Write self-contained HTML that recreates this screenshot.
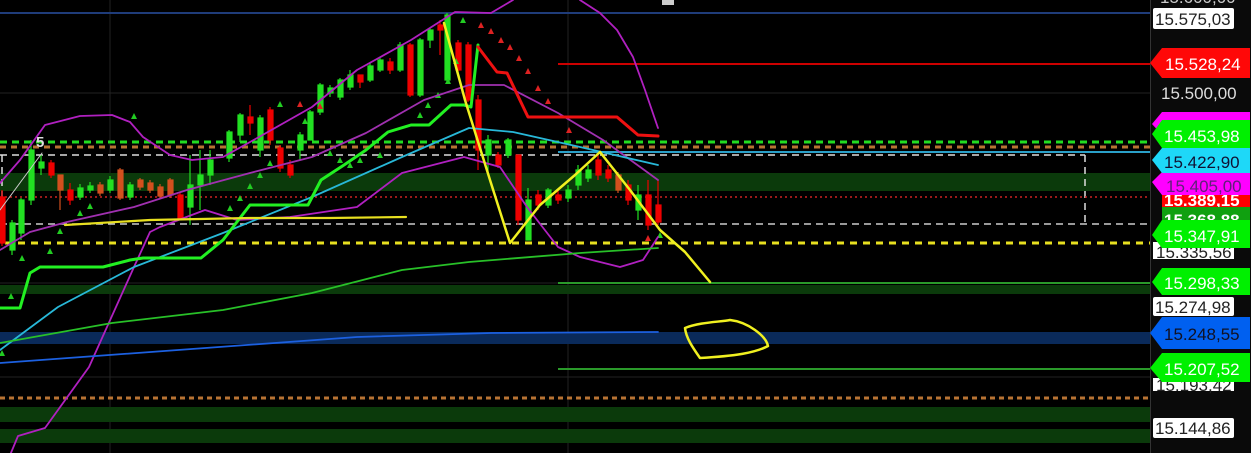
<!DOCTYPE html>
<html><head><meta charset="utf-8"><style>
html,body{margin:0;padding:0;background:#000;width:1251px;height:453px;overflow:hidden}
svg{display:block}
text{font-family:"Liberation Sans",sans-serif}
</style></head><body>
<svg width="1251" height="453" viewBox="0 0 1251 453" xmlns="http://www.w3.org/2000/svg">
<rect width="1251" height="453" fill="#000"/>
<g stroke="#222" stroke-width="1">
<line x1="0" y1="93" x2="1150" y2="93"/><line x1="0" y1="283" x2="1150" y2="283"/><line x1="0" y1="377" x2="1150" y2="377"/>
<line x1="110" y1="0" x2="110" y2="453"/><line x1="568" y1="0" x2="568" y2="453"/>
</g>
<rect x="0" y="173" width="1150" height="18" fill="#0b3a0b"/>
<rect x="0" y="285" width="1150" height="9" fill="#0b3a0b"/>
<rect x="0" y="332" width="1150" height="12" fill="#0a2a5a"/>
<rect x="0" y="407" width="1150" height="15" fill="#0b3a0b"/>
<rect x="0" y="429" width="1150" height="14" fill="#0b3a0b"/>
<line x1="0" y1="13" x2="1150" y2="13" stroke="#1f3c7a" stroke-width="2"/>
<line x1="558" y1="64" x2="1150" y2="64" stroke="#c00" stroke-width="2"/>
<line x1="558" y1="283" x2="1150" y2="283" stroke="#2a9a2a" stroke-width="2"/>
<line x1="558" y1="369" x2="1150" y2="369" stroke="#2a9a2a" stroke-width="2"/>
<line x1="558" y1="152" x2="1150" y2="152" stroke="#2aa0c8" stroke-width="2"/>
<line x1="0" y1="142" x2="1150" y2="142" stroke="#22dd22" stroke-width="3" stroke-dasharray="7,5"/>
<line x1="0" y1="147" x2="1150" y2="147" stroke="#b87333" stroke-width="3" stroke-dasharray="6,5"/>
<line x1="0" y1="155" x2="1085" y2="155" stroke="#ddd" stroke-width="1.5" stroke-dasharray="7,5"/>
<line x1="0" y1="224" x2="1150" y2="224" stroke="#ccc" stroke-width="1.5" stroke-dasharray="7,5"/>
<line x1="1085" y1="155" x2="1085" y2="224" stroke="#ddd" stroke-width="1.5" stroke-dasharray="7,5"/>
<line x1="2" y1="155" x2="2" y2="224" stroke="#ddd" stroke-width="1.5" stroke-dasharray="7,5"/>
<line x1="0" y1="197" x2="1150" y2="197" stroke="#c22" stroke-width="1.5" stroke-dasharray="2,3"/>
<line x1="5" y1="243" x2="1150" y2="243" stroke="#e8e020" stroke-width="3" stroke-dasharray="7,6"/>
<line x1="0" y1="398" x2="1150" y2="398" stroke="#b87333" stroke-width="3" stroke-dasharray="5,4"/>
<g stroke-width="1.2">
<g fill="#e00" stroke="#e00">
<line x1="2" y1="190" x2="2" y2="246"/><rect x="0" y="197" width="5" height="46"/>
<line x1="51" y1="160" x2="51" y2="178"/><rect x="49" y="163" width="5" height="12"/>
<line x1="70" y1="183" x2="70" y2="205"/><rect x="68" y="190" width="5" height="10"/>
<line x1="180" y1="193" x2="180" y2="220"/><rect x="178" y="195" width="5" height="23"/>
<line x1="250" y1="105" x2="250" y2="135"/><rect x="248" y="117" width="5" height="6"/>
<line x1="270" y1="107" x2="270" y2="145"/><rect x="268" y="110" width="5" height="30"/>
<line x1="280" y1="145" x2="280" y2="172"/><rect x="278" y="148" width="5" height="20"/>
<line x1="290" y1="160" x2="290" y2="178"/><rect x="288" y="165" width="5" height="10"/>
<line x1="360" y1="75" x2="360" y2="88"/><rect x="358" y="75" width="5" height="7"/>
<line x1="390" y1="58" x2="390" y2="74"/><rect x="388" y="62" width="5" height="8"/>
<line x1="410" y1="43" x2="410" y2="97"/><rect x="408" y="45" width="5" height="50"/>
<line x1="440" y1="20" x2="440" y2="55"/><rect x="438" y="25" width="5" height="5"/>
<line x1="458" y1="40" x2="458" y2="75"/><rect x="456" y="43" width="5" height="27"/>
<line x1="468" y1="42" x2="468" y2="102"/><rect x="466" y="45" width="5" height="55"/>
<line x1="478" y1="95" x2="478" y2="170"/><rect x="476" y="100" width="5" height="50"/>
<line x1="498" y1="152" x2="498" y2="168"/><rect x="496" y="155" width="5" height="10"/>
<line x1="518" y1="155" x2="518" y2="225"/><rect x="516" y="155" width="5" height="65"/>
<line x1="538" y1="190" x2="538" y2="210"/><rect x="536" y="195" width="5" height="10"/>
<line x1="558" y1="190" x2="558" y2="204"/><rect x="556" y="195" width="5" height="5"/>
<line x1="598" y1="155" x2="598" y2="180"/><rect x="596" y="160" width="5" height="15"/>
<line x1="608" y1="165" x2="608" y2="182"/><rect x="606" y="170" width="5" height="8"/>
<line x1="628" y1="180" x2="628" y2="205"/><rect x="626" y="185" width="5" height="15"/>
<line x1="648" y1="180" x2="648" y2="230"/><rect x="646" y="195" width="5" height="30"/>
<line x1="658" y1="180" x2="658" y2="225"/><rect x="656" y="205" width="5" height="17"/>
</g>
<g fill="#d2501e" stroke="#d2501e">
<line x1="60" y1="175" x2="60" y2="210"/><rect x="58" y="175" width="5" height="15"/>
<line x1="100" y1="182" x2="100" y2="196"/><rect x="98" y="185" width="5" height="8"/>
<line x1="120" y1="168" x2="120" y2="200"/><rect x="118" y="170" width="5" height="28"/>
<line x1="140" y1="178" x2="140" y2="190"/><rect x="138" y="180" width="5" height="7"/>
<line x1="150" y1="180" x2="150" y2="193"/><rect x="148" y="183" width="5" height="7"/>
<line x1="160" y1="184" x2="160" y2="199"/><rect x="158" y="187" width="5" height="9"/>
<line x1="170" y1="178" x2="170" y2="198"/><rect x="168" y="180" width="5" height="15"/>
<line x1="618" y1="172" x2="618" y2="193"/><rect x="616" y="175" width="5" height="15"/>
</g>
<g fill="#22e022" stroke="#22e022">
<line x1="12" y1="220" x2="12" y2="255"/><rect x="10" y="223" width="5" height="27"/>
<line x1="21" y1="198" x2="21" y2="240"/><rect x="19" y="200" width="5" height="33"/>
<line x1="31" y1="140" x2="31" y2="205"/><rect x="29" y="150" width="5" height="50"/>
<line x1="41" y1="155" x2="41" y2="175"/><rect x="39" y="162" width="5" height="6"/>
<line x1="80" y1="184" x2="80" y2="200"/><rect x="78" y="188" width="5" height="9"/>
<line x1="90" y1="182" x2="90" y2="193"/><rect x="88" y="186" width="5" height="4"/>
<line x1="110" y1="176" x2="110" y2="193"/><rect x="108" y="180" width="5" height="10"/>
<line x1="130" y1="182" x2="130" y2="200"/><rect x="128" y="185" width="5" height="12"/>
<line x1="190" y1="155" x2="190" y2="225"/><rect x="188" y="185" width="5" height="22"/>
<line x1="200" y1="150" x2="200" y2="210"/><rect x="198" y="175" width="5" height="10"/>
<line x1="210" y1="150" x2="210" y2="185"/><rect x="208" y="160" width="5" height="15"/>
<line x1="229" y1="130" x2="229" y2="162"/><rect x="227" y="132" width="5" height="26"/>
<line x1="240" y1="113" x2="240" y2="142"/><rect x="238" y="115" width="5" height="20"/>
<line x1="260" y1="115" x2="260" y2="157"/><rect x="258" y="118" width="5" height="32"/>
<line x1="300" y1="132" x2="300" y2="160"/><rect x="298" y="135" width="5" height="15"/>
<line x1="310" y1="110" x2="310" y2="140"/><rect x="308" y="112" width="5" height="28"/>
<line x1="320" y1="83" x2="320" y2="115"/><rect x="318" y="85" width="5" height="27"/>
<line x1="330" y1="85" x2="330" y2="97"/><rect x="328" y="88" width="5" height="5"/>
<line x1="340" y1="78" x2="340" y2="100"/><rect x="338" y="80" width="5" height="17"/>
<line x1="350" y1="70" x2="350" y2="90"/><rect x="348" y="75" width="5" height="12"/>
<line x1="370" y1="63" x2="370" y2="82"/><rect x="368" y="66" width="5" height="14"/>
<line x1="380" y1="58" x2="380" y2="72"/><rect x="378" y="60" width="5" height="10"/>
<line x1="400" y1="42" x2="400" y2="72"/><rect x="398" y="45" width="5" height="25"/>
<line x1="420" y1="38" x2="420" y2="97"/><rect x="418" y="40" width="5" height="55"/>
<line x1="430" y1="28" x2="430" y2="48"/><rect x="428" y="30" width="5" height="10"/>
<line x1="447" y1="13" x2="447" y2="82"/><rect x="445" y="15" width="5" height="65"/>
<line x1="488" y1="135" x2="488" y2="172"/><rect x="486" y="140" width="5" height="15"/>
<line x1="508" y1="138" x2="508" y2="158"/><rect x="506" y="140" width="5" height="15"/>
<line x1="528" y1="188" x2="528" y2="240"/><rect x="526" y="200" width="5" height="40"/>
<line x1="548" y1="188" x2="548" y2="208"/><rect x="546" y="190" width="5" height="15"/>
<line x1="568" y1="185" x2="568" y2="202"/><rect x="566" y="190" width="5" height="8"/>
<line x1="578" y1="165" x2="578" y2="190"/><rect x="576" y="170" width="5" height="15"/>
<line x1="588" y1="165" x2="588" y2="182"/><rect x="586" y="170" width="5" height="8"/>
<line x1="638" y1="185" x2="638" y2="220"/><rect x="636" y="195" width="5" height="15"/>
</g>
</g>
<g fill="#22cc22">
<path d="M2 350l3 6h-6z"/><path d="M11 293l3 6h-6z"/><path d="M22 255l3 6h-6z"/><path d="M50 248l3 6h-6z"/><path d="M60 228l3 6h-6z"/><path d="M80 210l3 6h-6z"/><path d="M90 203l3 6h-6z"/>
<path d="M134 113l3 6h-6z"/><path d="M280 101l3 6h-6z"/><path d="M230 205l3 6h-6z"/><path d="M240 195l3 6h-6z"/><path d="M250 183l3 6h-6z"/><path d="M260 172l3 6h-6z"/><path d="M270 160l3 6h-6z"/><path d="M305 118l3 6h-6z"/><path d="M330 150l3 6h-6z"/><path d="M340 157l3 6h-6z"/><path d="M350 162l3 6h-6z"/><path d="M360 157l3 6h-6z"/><path d="M380 152l3 6h-6z"/><path d="M420 112l3 6h-6z"/><path d="M428 102l3 6h-6z"/><path d="M438 92l3 6h-6z"/><path d="M448 78l3 6h-6z"/><path d="M456 58l3 6h-6z"/><path d="M463 17l3 6h-6z"/><path d="M660 232l3 6h-6z"/>
</g>
<g fill="#dd2222">
<path d="M300 101l3 6h-6z"/><path d="M320 103l3 6h-6z"/><path d="M481 22l3 6h-6z"/><path d="M491 28l3 6h-6z"/><path d="M501 37l3 6h-6z"/><path d="M510 44l3 6h-6z"/><path d="M519 55l3 6h-6z"/><path d="M528 68l3 6h-6z"/><path d="M538 85l3 6h-6z"/><path d="M548 98l3 6h-6z"/><path d="M569 127l3 6h-6z"/><path d="M648 235l3 6h-6z"/>
</g>
<g fill="none" stroke-linejoin="round" stroke-linecap="round">
<polyline stroke="#b020c0" stroke-width="1.8" points="0,183 20,160 45,125 80,116 112,115 130,122 143,137 170,155 192,160 223,157 259,137 312,107 357,70 411,40 455,12 491,13 513,0"/>
<polyline stroke="#b020c0" stroke-width="1.8" points="580,0 600,13 617,30 633,57 645,90 658,128"/>
<polyline stroke="#a030b0" stroke-width="1.8" points="0,250 30,232 67,222 134,207 187,190 250,173 312,157 366,133 424,100 469,85 504,85 558,113 603,140 658,180"/>
<polyline stroke="#b020c0" stroke-width="1.8" points="8,460 18,436 45,428 89,367 134,267 150,232 160,227 205,210 237,220 290,217 357,207 402,173 464,157 500,167 527,207 558,247 580,257 620,267 643,260 658,237"/>
<polyline stroke="#28b8d8" stroke-width="1.8" points="0,350 58,307 134,267 223,233 312,197 402,157 469,128 513,132 580,147 658,165"/>
<polyline stroke="#28c028" stroke-width="1.8" points="0,343 112,323 223,310 312,293 402,270 469,262 580,253 658,248"/>
<polyline stroke="#1c60e0" stroke-width="1.8" points="0,363 178,350 357,337 491,333 658,332"/>
<polyline stroke="#22f022" stroke-width="3" points="0,308 20,308 30,273 40,267 103,267 130,260 143,258 201,258 223,240 250,205 308,205 321,180 344,165 366,150 388,132 411,125 429,125 451,105 464,105 471,107 478,45"/>
<polyline stroke="#ee1111" stroke-width="3" points="478,47 497,72 507,73 528,117 617,117 638,135 658,136"/>
<polyline stroke="#e8e020" stroke-width="2.2" points="65,225 150,220 250,218 330,218 406,217"/>
<polyline stroke="#f0f020" stroke-width="2.5" points="444,23 465,100 490,180 510,243 540,205 575,175 600,152 630,190 660,230 685,252 710,282"/>
<path stroke="#f0f020" stroke-width="2.5" d="M685 328 C700 322,720 322,730 320 C748 322,766 336,768 346 C755 353,735 356,700 358 C693 348,686 338,685 328 Z"/>
<line x1="0" y1="210" x2="42" y2="153" stroke="#ccc" stroke-width="1"/>
</g>
<text x="36" y="147" fill="#ddd" font-size="15" font-weight="bold">5</text>
<rect x="662" y="0" width="12" height="5" fill="#ccc"/>
<rect x="1150" y="0" width="101" height="453" fill="#0a0a0a"/>
<line x1="1150.5" y1="0" x2="1150.5" y2="453" stroke="#333"/>
<g font-size="17">
<text x="1160" y="3" fill="#ccc">15.600,00</text>
<rect x="1153" y="8" width="81" height="21" fill="#fff" rx="2"/><text x="1155" y="25" fill="#222">15.575,03</text>
<path d="M1150 63 L1162 48 H1250 V78 H1162 Z" fill="#ff0808"/><text x="1165" y="70" fill="#fff">15.528,24</text>
<text x="1161" y="99" fill="#ddd">15.500,00</text>
<path d="M1152 124 L1162 112 H1250 V135 H1162 Z" fill="#f0f"/>
<rect x="1162" y="188" width="88" height="20" fill="#f00"/><text x="1164" y="206" fill="#fff" font-weight="bold">15.389,15</text>
<path d="M1152 182 L1162 172 H1250 V195 H1162 Z" fill="#f0f"/><text x="1166" y="192" fill="#60207a">15.405,00</text>
<path d="M1152 160 L1162 148 H1250 V173 H1162 Z" fill="#1ed8f8"/><text x="1164" y="168" fill="#113">15.422,90</text>
<path d="M1152 134 L1162 120 H1250 V148 H1162 Z" fill="#00f000"/><text x="1164" y="142" fill="#fff">15.453,98</text>
<rect x="1162" y="207" width="88" height="16" fill="#10a010"/><text x="1164" y="226" fill="#fff" font-weight="bold">15.368,88</text>
<rect x="1153" y="242" width="81" height="17" fill="#fff"/><text x="1156" y="258" fill="#222">15.335,56</text>
<path d="M1152 235 L1162 220 H1250 V248 H1162 Z" fill="#00f000"/><text x="1164" y="242" fill="#fff">15.347,91</text>
<path d="M1152 282 L1162 268 H1250 V295 H1162 Z" fill="#00f000"/><text x="1164" y="289" fill="#fff">15.298,33</text>
<rect x="1153" y="297" width="81" height="19" fill="#fff" rx="2"/><text x="1155" y="313" fill="#222">15.274,98</text>
<path d="M1150 333 L1162 317 H1250 V349 H1162 Z" fill="#0060f0"/><text x="1164" y="340" fill="#112">15.248,55</text>
<rect x="1153" y="378" width="81" height="13" fill="#fff"/><text x="1156" y="391" fill="#222">15.193,42</text>
<path d="M1150 368 L1162 353 H1250 V382 H1162 Z" fill="#00f000"/><text x="1164" y="375" fill="#fff">15.207,52</text>
<rect x="1153" y="418" width="81" height="20" fill="#fff" rx="2"/><text x="1155" y="434" fill="#222">15.144,86</text>
</g>
</svg>
</body></html>
